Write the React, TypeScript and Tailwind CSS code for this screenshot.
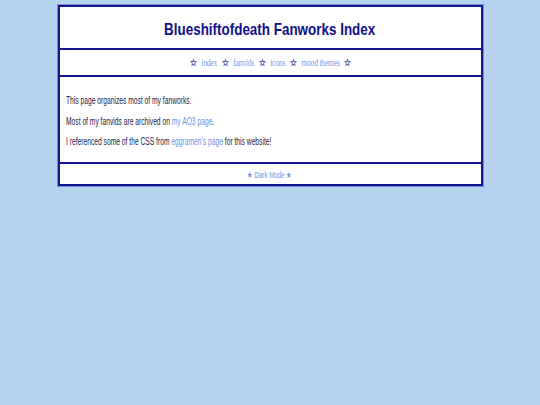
import React from "react";

const navItems = ["index", "fanvids", "icons", "mood themes"];

const sans = { fontFamily: '"Liberation Sans", Arial, sans-serif' };

export default function App() {
  return (
    <div className="min-h-[405px] w-full bg-[#b5d3ee] pt-[5px]">
      <div className="mx-auto w-[425px] border-2 border-[#14148c] bg-white shadow-[0_0_0_1px_#7e86de]">
        {/* Header */}
        <header className="flex h-[41px] items-center justify-center pt-[5px]">
          <h1 className="origin-center scale-x-[0.79] text-[17px] font-bold text-[#0f0f8f]" style={sans}>
            Blueshiftofdeath Fanworks Index
          </h1>
        </header>

        {/* Nav */}
        <nav
          className="flex h-[27px] items-center justify-center border-t-2 border-[#14148c]"
          style={{ fontFamily: '"Liberation Serif", "Times New Roman", serif' }}
        >
          <div className="flex origin-center scale-x-[0.765] items-center gap-[6px] text-[10px] text-[#7f99e6]">
            <span className="font-bold text-[#38389e]">☆</span>
            {navItems.map((item) => (
              <React.Fragment key={item}>
                <a href="#" className="tracking-[-0.3px]">{item}</a>
                <span className="font-bold text-[#38389e]">☆</span>
              </React.Fragment>
            ))}
          </div>
        </nav>

        {/* Content */}
        <main
          className="h-[87px] border-t-2 border-[#14148c] px-[6px] pt-[14px] text-[10px] leading-[20.5px] text-[#1c1c48]"
          style={sans}
        >
          <p className="origin-left scale-x-[0.67] whitespace-nowrap">This page organizes most of my fanworks.</p>
          <p className="origin-left scale-x-[0.67] whitespace-nowrap">
            Most of my fanvids are archived on{" "}
            <a href="#" className="text-[#6f93ea]">my AO3 page</a>.
          </p>
          <p className="origin-left scale-x-[0.67] whitespace-nowrap">
            I referenced some of the CSS from{" "}
            <a href="#" className="text-[#6f93ea]">eggramen's page</a> for this website!
          </p>
        </main>

        {/* Footer */}
        <footer
          className="flex h-[22px] items-center justify-center border-t-2 border-[#14148c] pt-[3px] text-[9px] text-[#6f93ea]"
          style={sans}
        >
          <button type="button" className="origin-center scale-x-[0.68] cursor-pointer">★ Dark Mode ★</button>
        </footer>
      </div>
    </div>
  );
}
